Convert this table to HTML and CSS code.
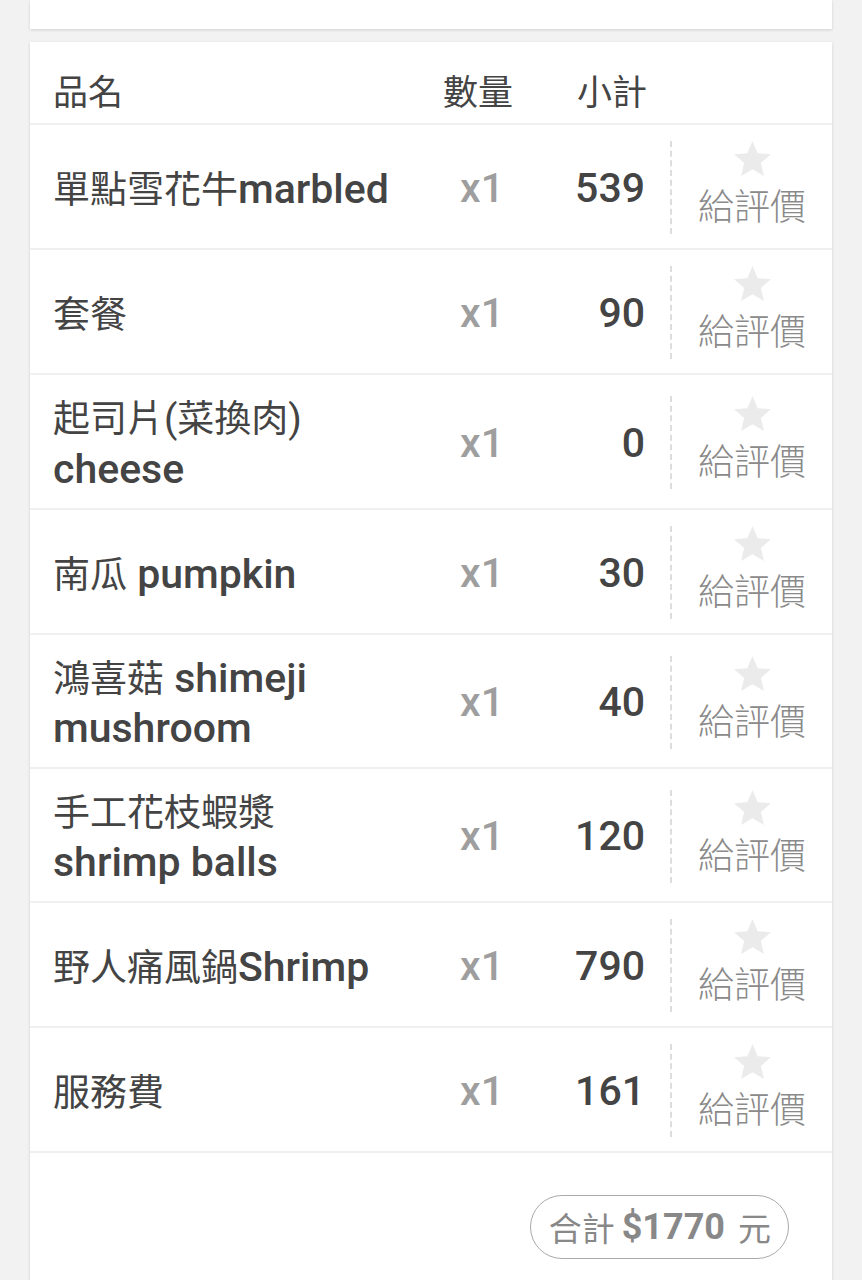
FILE: index.html
```html
<!DOCTYPE html>
<html lang="zh-Hant">
<head>
  <meta charset="UTF-8">
  <meta name="viewport" content="width=device-width, initial-scale=1.0">
  <title>訂單明細</title>
  <link rel="stylesheet" href="styles.css">
</head>
<body>
  <div class="page">
    <!-- top card (cut off) -->
    <div class="card card-top"></div>

    <!-- Order Items -->
    <section class="card order">
      <div class="row head">
        <div class="col-name">品名</div>
        <div class="col-qty">數量</div>
        <div class="col-sub">小計</div>
        <div></div>
      </div>

      <div class="row item">
        <div class="col-name"><span class="zh">單點雪花牛</span>marbled</div>
        <div class="col-qty">x1</div>
        <div class="col-sub">539</div>
        <div class="rate">
          <svg class="star" viewBox="2 2 20 19"><path d="M12 17.27L18.18 21l-1.64-7.03L22 9.24l-7.19-.61L12 2 9.19 8.63 2 9.24l5.46 4.73L5.82 21z"/></svg>
          <span>給評價</span>
        </div>
      </div>

      <div class="row item">
        <div class="col-name"><span class="zh">套餐</span></div>
        <div class="col-qty">x1</div>
        <div class="col-sub">90</div>
        <div class="rate">
          <svg class="star" viewBox="2 2 20 19"><path d="M12 17.27L18.18 21l-1.64-7.03L22 9.24l-7.19-.61L12 2 9.19 8.63 2 9.24l5.46 4.73L5.82 21z"/></svg>
          <span>給評價</span>
        </div>
      </div>

      <div class="row item">
        <div class="col-name"><span class="zh">起司片</span><span class="paren">(</span><span class="zh">菜換肉</span><span class="paren">)</span><br>cheese</div>
        <div class="col-qty">x1</div>
        <div class="col-sub">0</div>
        <div class="rate">
          <svg class="star" viewBox="2 2 20 19"><path d="M12 17.27L18.18 21l-1.64-7.03L22 9.24l-7.19-.61L12 2 9.19 8.63 2 9.24l5.46 4.73L5.82 21z"/></svg>
          <span>給評價</span>
        </div>
      </div>

      <div class="row item">
        <div class="col-name"><span class="zh">南瓜</span> pumpkin</div>
        <div class="col-qty">x1</div>
        <div class="col-sub">30</div>
        <div class="rate">
          <svg class="star" viewBox="2 2 20 19"><path d="M12 17.27L18.18 21l-1.64-7.03L22 9.24l-7.19-.61L12 2 9.19 8.63 2 9.24l5.46 4.73L5.82 21z"/></svg>
          <span>給評價</span>
        </div>
      </div>

      <div class="row item">
        <div class="col-name"><span class="zh">鴻喜菇</span> shimeji<br>mushroom</div>
        <div class="col-qty">x1</div>
        <div class="col-sub">40</div>
        <div class="rate">
          <svg class="star" viewBox="2 2 20 19"><path d="M12 17.27L18.18 21l-1.64-7.03L22 9.24l-7.19-.61L12 2 9.19 8.63 2 9.24l5.46 4.73L5.82 21z"/></svg>
          <span>給評價</span>
        </div>
      </div>

      <div class="row item">
        <div class="col-name"><span class="zh">手工花枝蝦漿</span><br>shrimp balls</div>
        <div class="col-qty">x1</div>
        <div class="col-sub">120</div>
        <div class="rate">
          <svg class="star" viewBox="2 2 20 19"><path d="M12 17.27L18.18 21l-1.64-7.03L22 9.24l-7.19-.61L12 2 9.19 8.63 2 9.24l5.46 4.73L5.82 21z"/></svg>
          <span>給評價</span>
        </div>
      </div>

      <div class="row item">
        <div class="col-name"><span class="zh">野人痛風鍋</span>Shrimp</div>
        <div class="col-qty">x1</div>
        <div class="col-sub">790</div>
        <div class="rate">
          <svg class="star" viewBox="2 2 20 19"><path d="M12 17.27L18.18 21l-1.64-7.03L22 9.24l-7.19-.61L12 2 9.19 8.63 2 9.24l5.46 4.73L5.82 21z"/></svg>
          <span>給評價</span>
        </div>
      </div>

      <div class="row item">
        <div class="col-name"><span class="zh">服務費</span></div>
        <div class="col-qty">x1</div>
        <div class="col-sub">161</div>
        <div class="rate">
          <svg class="star" viewBox="2 2 20 19"><path d="M12 17.27L18.18 21l-1.64-7.03L22 9.24l-7.19-.61L12 2 9.19 8.63 2 9.24l5.46 4.73L5.82 21z"/></svg>
          <span>給評價</span>
        </div>
      </div>

      <!-- Total -->
      <div class="total">
        <div class="total-pill"><span class="zh">合計</span> <b>$1770</b> <span class="zh">元</span></div>
      </div>
    </section>
  </div>
</body>
</html>
```

FILE: styles.css
```css
/* Global Styles */
* {
  box-sizing: border-box;
  margin: 0;
  padding: 0;
}

body {
  font-family: Roboto, "Noto Sans CJK TC", sans-serif;
  color: #444;
  background-color: #f2f2f2;
}

.page {
  padding: 0 30px;
}

.card {
  background-color: #fff;
  box-shadow: 0 1px 3px rgba(0, 0, 0, 0.14);
}

.card-top {
  height: 29px;
}

.order {
  margin-top: 13px;
  min-height: 1300px;
}

.zh {
  font-family: "Noto Sans CJK TC", sans-serif;
  font-weight: 400;
  font-size: 37px;
}

.paren {
  font-weight: 400;
  font-size: 39px;
}

/* Table rows */
.row {
  display: grid;
  grid-template-columns: 1fr 104px 136px 162px;
  align-items: center;
  padding-left: 23px;
  border-bottom: 2px solid #f0f0f0;
}

.head {
  height: 83px;
  padding-top: 14px;
  font-family: "Noto Sans CJK TC", sans-serif;
  font-size: 35px;
  font-weight: 400;
  color: #444;
}

.head .col-qty {
  text-align: center;
  padding-right: 8px;
}

.head .col-sub {
  text-align: right;
  padding-right: 23px;
}

.item {
  min-height: 125px;
  padding-top: 16px;
  padding-bottom: 14px;
  font-size: 41px;
  font-weight: 500;
  line-height: 50px;
}

.item .col-name {
  color: #444;
}

.item .col-qty {
  text-align: center;
  color: #9e9e9e;
}

.item .col-sub {
  text-align: right;
  padding-right: 25px;
  color: #444;
}

/* Rating cell */
.rate {
  height: 93px;
  border-left: 2px dashed #ddd;
  display: flex;
  flex-direction: column;
  align-items: center;
  font-family: "Noto Sans CJK TC", sans-serif;
  font-size: 36px;
  font-weight: 300;
  line-height: 44px;
  color: #8a8a8a;
}

.star {
  width: 37px;
  height: 35px;
  fill: #ebebeb;
  margin-bottom: 6px;
}

/* Total */
.total {
  display: flex;
  justify-content: flex-end;
  padding: 42px 43px 0 0;
}

.total-pill {
  height: 64px;
  padding: 0 17px 0 18px;
  border: 1.5px solid #aaa;
  border-radius: 32px;
  display: flex;
  align-items: center;
  gap: 7px;
  color: #888;
  font-size: 36px;
}

.total-pill .zh {
  font-size: 33px;
}

.total-pill b {
  font-weight: 700;
  margin-right: 6px;
}
```
